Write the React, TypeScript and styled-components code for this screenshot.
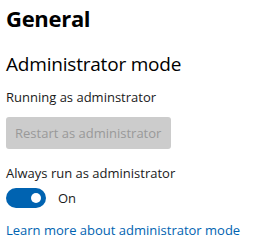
import styled, { createGlobalStyle } from "styled-components";

const GlobalStyle = createGlobalStyle`
  body {
    margin: 0;
    background: #ffffff;
    font-family: "Open Sans", "Noto Sans", sans-serif;
  }
`;

const Page = styled.div`
  width: 258px;
  height: 247px;
  padding: 0 6px;
  box-sizing: border-box;
  display: flex;
  flex-direction: column;
  align-items: flex-start;
`;

const Title = styled.h1`
  margin: 3px 0 0;
  font: 700 22px/30px "Open Sans", sans-serif;
  color: #000000;
  letter-spacing: -0.3px;
`;

const GroupTitle = styled.h2`
  margin: 18px 0 0;
  font: 400 19px/26px "Open Sans", sans-serif;
  color: #000000;
  letter-spacing: -0.2px;
`;

const Label = styled.div<{ $top: number }>`
  margin-top: ${(p) => p.$top}px;
  font: 400 13px/20px "Open Sans", sans-serif;
  color: #1a1a1a;
  white-space: nowrap;
`;

const Button = styled.button`
  margin-top: 10px;
  width: 165px;
  height: 32px;
  padding: 0 9px;
  border: none;
  border-radius: 3px;
  background: #cccccc;
  color: #999999;
  font: 400 13px "Open Sans", sans-serif;
  text-align: left;
  white-space: nowrap;
`;

const ToggleRow = styled.div`
  margin-top: 5px;
  display: flex;
  align-items: center;
  gap: 12px;
`;

const Track = styled.div<{ $on: boolean }>`
  width: 40px;
  height: 20px;
  border-radius: 10px;
  background: ${(p) => (p.$on ? "#0063b1" : "#ffffff")};
  position: relative;
`;

const Thumb = styled.span`
  position: absolute;
  top: 5px;
  right: 5px;
  width: 10px;
  height: 10px;
  border-radius: 50%;
  background: #ffffff;
`;

const State = styled.span`
  font: 400 13px/20px "Open Sans", sans-serif;
  color: #1a1a1a;
`;

const Link = styled.a`
  margin-top: 12px;
  font: 400 13px/20px "Open Sans", sans-serif;
  color: #0063b1;
  text-decoration: none;
  white-space: nowrap;
`;

export default function App() {
  return (
    <>
      <GlobalStyle />
      <Page>
        <Title>General</Title>
        <GroupTitle>Administrator mode</GroupTitle>
        <Label $top={10}>Running as adminstrator</Label>
        <Button disabled>Restart as administrator</Button>
        <Label $top={14}>Always run as administrator</Label>
        <ToggleRow>
          <Track $on>
            <Thumb />
          </Track>
          <State>On</State>
        </ToggleRow>
        <Link href="#">Learn more about administrator mode</Link>
      </Page>
    </>
  );
}
